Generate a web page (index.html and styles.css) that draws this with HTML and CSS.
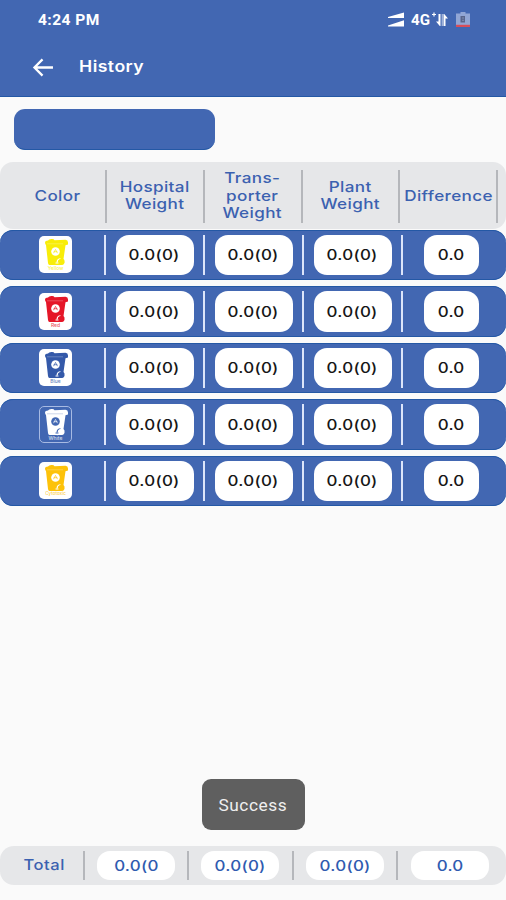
FILE: index.html
```html
<!DOCTYPE html>
<html lang="en">
<head>
<meta charset="utf-8">
<title>History</title>
<link rel="stylesheet" href="styles.css">
</head>
<body>
<svg width="0" height="0" class="defs" aria-hidden="true">
  <symbol id="bin" viewBox="0 0 33 37">
    <path fill="currentColor" d="M6 6.200Q6 4.700 9 4.500Q10 2.800 13 3Q15 3 15.500 4.200L26.500 3.800Q29 4 29 6.500V8.500L26.500 9.300L24.500 23Q26 24 25.500 27Q25 29 22 29H10.500Q9.300 29 9 27L7 9Q6 8.500 6 6.200Z"/>
    <path d="M8 7.800H24" stroke="var(--ground)" stroke-width=".5" opacity=".5"/>
    <circle cx="16.500" cy="15.500" r="4.300" fill="var(--ground)"/>
    <path d="M14.500 17.200L16.500 13.400L18.500 17.200M14.700 15.700H18.300" fill="none" stroke="currentColor" stroke-width="1" opacity=".65"/>
    <path d="M18 26.500Q18.500 22.800 21.500 22.800" fill="none" stroke="var(--ground)" stroke-width="1.200"/>
    <circle cx="22" cy="26" r="3" fill="currentColor"/>
    <path d="M16.500 27H19.500" stroke="var(--ground)" stroke-width="1"/>
  </symbol>
</svg>
<header class="appbar">
  <div class="status">
    <span class="time">4:24 PM</span>
    <span class="indicators">
      <svg class="signal" viewBox="0 0 17 16"><path fill="#fff" d="M0 6V5L16 .500V6ZM0 14.500V13.500L16 8.200V14.500Z"/></svg>
      <span class="network">4G</span>
      <svg class="data" viewBox="0 0 18 16"><path fill="none" stroke="#fff" stroke-width="1.200" d="M0 2.500H4M2 .500V4.500"/><path fill="#fff" d="M6.500 2H8.500V14H7.800L4 9.500H6.500ZM9.800 2H10.500V14H9.800ZM11.500 2H12.200L16 6.500H13.500V14H11.500Z"/></svg>
      <svg class="battery" viewBox="0 0 14 16"><path fill="#91a6d5" d="M0 1.500H4.500V0H9.500V1.500H14V13H0Z"/><path fill="#d94d59" d="M0 12.800H14V15H0Z"/><path fill="#59658a" d="M4.500 4H9V10.500H4.500Z"/><path stroke="#7d8db3" d="M6 6H8M6 8.300H8"/></svg>
    </span>
  </div>
  <div class="toolbar">
    <svg class="back" viewBox="0 0 22 20"><path d="M21.500 10H2M10.500 1.500L2 10L10.500 18.500" fill="none" stroke="#fff" stroke-width="2.400"/></svg>
    <h1>History</h1>
  </div>
</header>
<main>
  <div class="filter"></div>
  <section class="table">
    <div class="head">
      <div><span>Color</span></div><div><span>Hospital<br>Weight</span></div><div><span>Trans-<br>porter<br>Weight</span></div><div><span>Plant<br>Weight</span></div><div><span>Difference</span></div>
    </div>
    <div class="row"><div class="cell"><div class="tile yellow"><svg><use href="#bin"/></svg><small>Yellow</small></div></div><div class="cell"><b><span>0.0(0)</span></b></div><div class="cell"><b><span>0.0(0)</span></b></div><div class="cell"><b><span>0.0(0)</span></b></div><div class="cell"><b><span>0.0</span></b></div></div>
    <div class="row"><div class="cell"><div class="tile red"><svg><use href="#bin"/></svg><small>Red</small></div></div><div class="cell"><b><span>0.0(0)</span></b></div><div class="cell"><b><span>0.0(0)</span></b></div><div class="cell"><b><span>0.0(0)</span></b></div><div class="cell"><b><span>0.0</span></b></div></div>
    <div class="row"><div class="cell"><div class="tile blue"><svg><use href="#bin"/></svg><small>Blue</small></div></div><div class="cell"><b><span>0.0(0)</span></b></div><div class="cell"><b><span>0.0(0)</span></b></div><div class="cell"><b><span>0.0(0)</span></b></div><div class="cell"><b><span>0.0</span></b></div></div>
    <div class="row"><div class="cell"><div class="tile white"><svg><use href="#bin"/></svg><small>White</small></div></div><div class="cell"><b><span>0.0(0)</span></b></div><div class="cell"><b><span>0.0(0)</span></b></div><div class="cell"><b><span>0.0(0)</span></b></div><div class="cell"><b><span>0.0</span></b></div></div>
    <div class="row"><div class="cell"><div class="tile amber"><svg><use href="#bin"/></svg><small>Cytotoxic</small></div></div><div class="cell"><b><span>0.0(0)</span></b></div><div class="cell"><b><span>0.0(0)</span></b></div><div class="cell"><b><span>0.0(0)</span></b></div><div class="cell"><b><span>0.0</span></b></div></div>
  </section>
</main>
<div class="toast"><span>Success</span></div>
<footer class="total">
  <div><span>Total</span></div><div><b><span>0.0(0</span></b></div><div><b><span>0.0(0)</span></b></div><div><b><span>0.0(0)</span></b></div><div><b><span>0.0</span></b></div>
</footer>
</body>
</html>
```
FILE: styles.css
```css
* { box-sizing: border-box; }
body {
  margin: 0;
  height: 900px;
  display: flex;
  flex-direction: column;
  background: #fafafa;
  font-family: Inter, "Liberation Sans", sans-serif;
  font-size: 14.5px;
  font-weight: 500;
  overflow: hidden;
}
.defs { position: absolute; }
svg { display: block; }
.appbar {
  height: 97px;
  flex: none;
  background: #4267b2;
  border-bottom: 1px solid #2458a5;
  color: #fff;
}
.status {
  height: 40px;
  padding: 0 36px 0 38px;
  display: flex;
  align-items: center;
  justify-content: space-between;
}
.time { font: 700 14px Roboto, sans-serif; letter-spacing: .4px; transform: scaleX(1.11); transform-origin: left; }
.indicators { display: flex; align-items: center; }
.signal { width: 17px; height: 16px; margin-right: 6px; }
.network { width: 21px; font: 700 14px Roboto, sans-serif; transform: scaleX(1.08); transform-origin: left; }
.data { width: 18px; height: 16px; margin-right: 6px; }
.battery { width: 14px; height: 16px; }
.toolbar { height: 54px; display: flex; align-items: center; padding-left: 32px; }
.back { width: 22px; height: 19px; margin-right: 25px; }
h1 { margin: -2px 0 0; font-size: 15.5px; font-weight: 600; letter-spacing: .4px; transform: scaleX(1.14); transform-origin: left; }
main { flex: 1; padding-top: 12px; }
.filter { width: 201px; height: 41px; margin-left: 13.5px; border-radius: 11px; background: #4267b2; border-bottom: 1px solid #2458a5; }
.table { margin-top: 12px; }
.head {
  height: 67px;
  margin-bottom: .5px;
  padding: 8px 8px 7px 8px;
  display: grid;
  grid-template-columns: 99px repeat(4, 97.75px);
  border-radius: 13px;
  background: #e6e7e9;
  color: #3b61b0;
  line-height: 17.5px;
  letter-spacing: .3px;
  text-align: center;
}
.head div { display: flex; align-items: center; justify-content: center; border-right: 2px solid #b5b7bb; }
.head div:first-child { padding-left: 2px; }
.head span { transform: translateY(-1px) scaleX(1.18); }
.row {
  height: 50.5px;
  margin-bottom: 6px;
  padding: 5px 0;
  display: grid;
  grid-template-columns: 106px repeat(3, 99px) 1fr;
  border-radius: 13px;
  background: #4267b2;
  box-shadow: inset 0 1px #2458a5, inset 0 -1px #2458a5;
}
.cell { display: flex; align-items: center; justify-content: center; border-right: 2px solid #dce5fa; }
.cell:first-child { padding-left: 7px; }
.cell:last-child { border: 0; padding-right: 7px; }
b {
  width: 78px;
  height: 40.5px;
  display: flex;
  align-items: center;
  justify-content: center;
  border-radius: 13px;
  background: #fff;
  color: #161616;
  font-size: 14px;
  font-weight: 500;
  letter-spacing: .2px;
}
b span { transform: scaleX(1.21); }
.cell:last-child b { width: 55px; }
.tile {
  --ground: #fff;
  width: 33px;
  height: 37px;
  display: flex;
  flex-direction: column;
  align-items: center;
  border-radius: 5px;
  background: var(--ground);
}
.tile svg { width: 33px; height: 37px; flex: none; }
.tile small { margin-top: -8px; font-size: 5px; line-height: 6px; opacity: .75; }
.yellow { color: #f8ed09; }
.red { color: #e51628; }
.blue { color: #3459a9; }
.amber { color: #fdc20a; }
.amber small { font-size: 4.5px; }
.white { --ground: #4267b2; color: #fff; border: 1px solid #a7bae3; }
.white svg { margin: -1px; }
.white small { margin-top: -7px; }
.toast {
  width: 103px;
  height: 51px;
  margin: 0 auto 15.5px;
  display: flex;
  align-items: center;
  justify-content: center;
  border-radius: 9px;
  background: #5f5f5f;
  color: #f0f0f0;
  font: 400 16px Roboto, sans-serif;
  letter-spacing: .5px;
}
.toast span { transform: translateY(1px) scaleX(1.08); }
.total {
  height: 39.5px;
  margin-bottom: 15px;
  padding: 5.5px 4px 5.5px 0;
  display: grid;
  grid-template-columns: 85px repeat(3, 104.3px) 1fr;
  border-radius: 14px;
  background: #e6e7e9;
  color: #3b61b0;
  letter-spacing: .5px;
}
.total > div { display: flex; align-items: center; justify-content: center; border-right: 2px solid #b5b7bb; }
.total > div:first-child { padding-left: 6px; }
.total > div:first-child span { transform: translateY(-1px) scaleX(1.14); }
.total > div:last-child { border: 0; }
.total b { height: 28.500px; color: #2f5bb0; }
```
